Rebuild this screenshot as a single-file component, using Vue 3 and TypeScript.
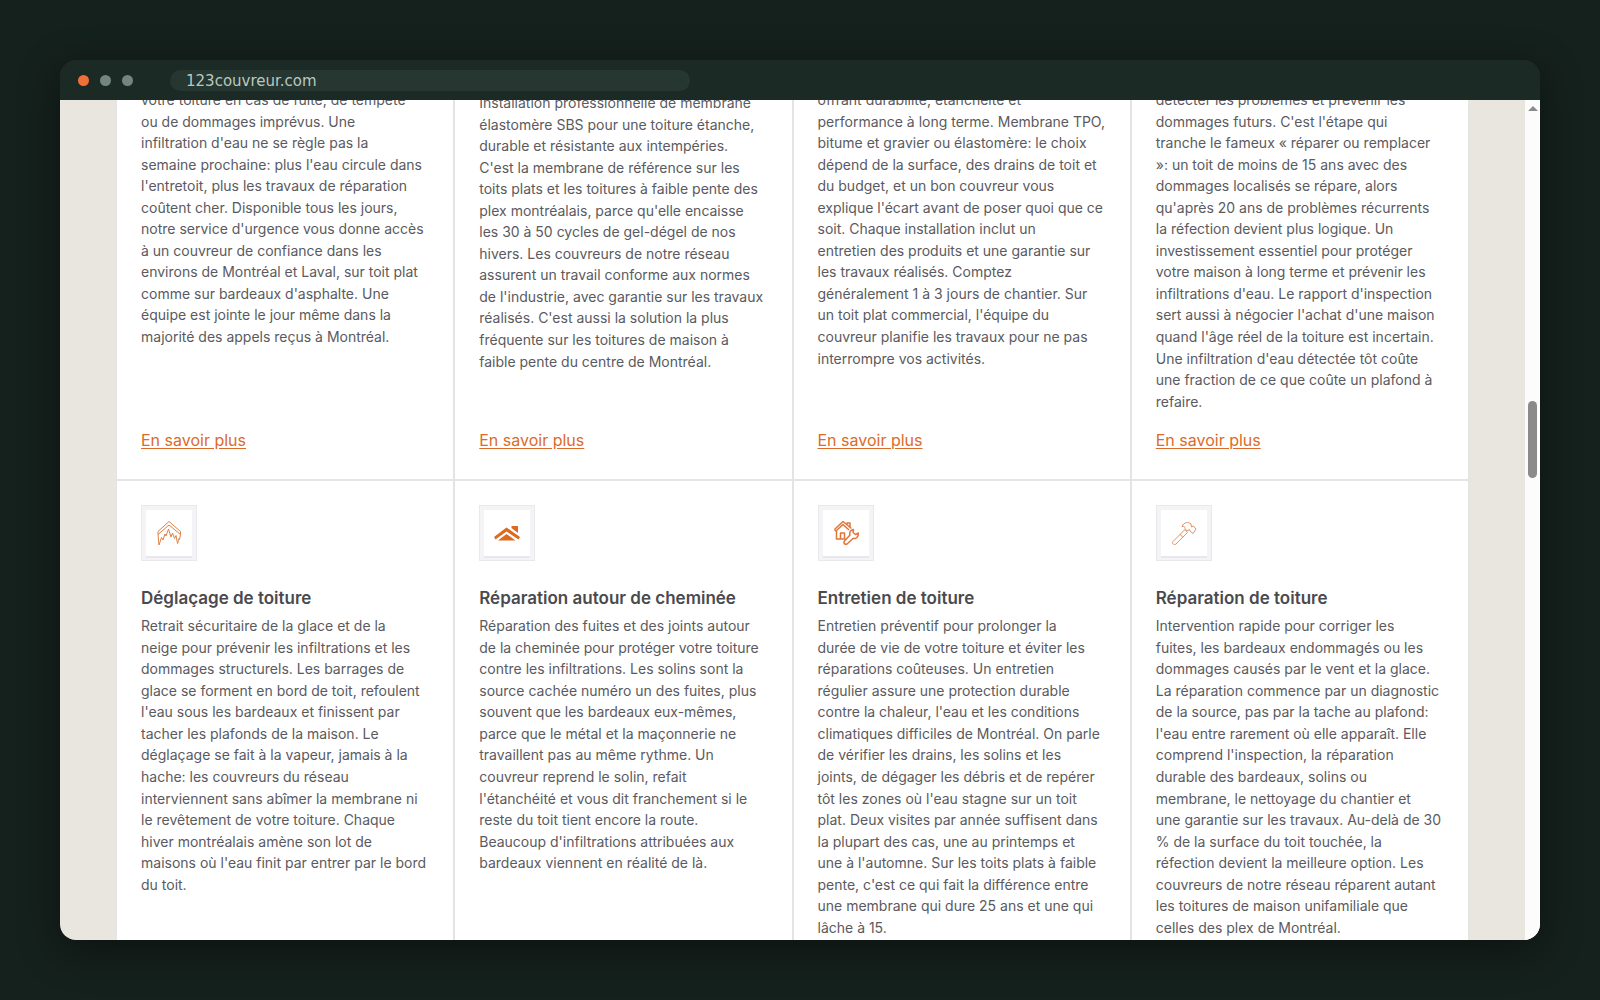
<script setup lang="ts">
interface Service {
  text: string
  title?: string
  icon?: 'ice' | 'roof' | 'care' | 'hammer'
  lowered?: boolean
}

const firstRow: Service[] = [
  {
    text: `votre toiture en cas de fuite, de tempête
ou de dommages imprévus. Une
infiltration d'eau ne se règle pas la
semaine prochaine: plus l'eau circule dans
l'entretoit, plus les travaux de réparation
coûtent cher. Disponible tous les jours,
notre service d'urgence vous donne accès
à un couvreur de confiance dans les
environs de Montréal et Laval, sur toit plat
comme sur bardeaux d'asphalte. Une
équipe est jointe le jour même dans la
majorité des appels reçus à Montréal.`,
  },
  {
    lowered: true,
    text: `Installation professionnelle de membrane
élastomère SBS pour une toiture étanche,
durable et résistante aux intempéries.
C'est la membrane de référence sur les
toits plats et les toitures à faible pente des
plex montréalais, parce qu'elle encaisse
les 30 à 50 cycles de gel-dégel de nos
hivers. Les couvreurs de notre réseau
assurent un travail conforme aux normes
de l'industrie, avec garantie sur les travaux
réalisés. C'est aussi la solution la plus
fréquente sur les toitures de maison à
faible pente du centre de Montréal.`,
  },
  {
    text: `offrant durabilité, étanchéité et
performance à long terme. Membrane TPO,
bitume et gravier ou élastomère: le choix
dépend de la surface, des drains de toit et
du budget, et un bon couvreur vous
explique l'écart avant de poser quoi que ce
soit. Chaque installation inclut un
entretien des produits et une garantie sur
les travaux réalisés. Comptez
généralement 1 à 3 jours de chantier. Sur
un toit plat commercial, l'équipe du
couvreur planifie les travaux pour ne pas
interrompre vos activités.`,
  },
  {
    text: `détecter les problèmes et prévenir les
dommages futurs. C'est l'étape qui
tranche le fameux « réparer ou remplacer
»: un toit de moins de 15 ans avec des
dommages localisés se répare, alors
qu'après 20 ans de problèmes récurrents
la réfection devient plus logique. Un
investissement essentiel pour protéger
votre maison à long terme et prévenir les
infiltrations d'eau. Le rapport d'inspection
sert aussi à négocier l'achat d'une maison
quand l'âge réel de la toiture est incertain.
Une infiltration d'eau détectée tôt coûte
une fraction de ce que coûte un plafond à
refaire.`,
  },
]

const secondRow: Service[] = [
  {
    icon: 'ice',
    title: 'Déglaçage de toiture',
    text: `Retrait sécuritaire de la glace et de la
neige pour prévenir les infiltrations et les
dommages structurels. Les barrages de
glace se forment en bord de toit, refoulent
l'eau sous les bardeaux et finissent par
tacher les plafonds de la maison. Le
déglaçage se fait à la vapeur, jamais à la
hache: les couvreurs du réseau
interviennent sans abîmer la membrane ni
le revêtement de votre toiture. Chaque
hiver montréalais amène son lot de
maisons où l'eau finit par entrer par le bord
du toit.`,
  },
  {
    icon: 'roof',
    title: 'Réparation autour de cheminée',
    text: `Réparation des fuites et des joints autour
de la cheminée pour protéger votre toiture
contre les infiltrations. Les solins sont la
source cachée numéro un des fuites, plus
souvent que les bardeaux eux-mêmes,
parce que le métal et la maçonnerie ne
travaillent pas au même rythme. Un
couvreur reprend le solin, refait
l'étanchéité et vous dit franchement si le
reste du toit tient encore la route.
Beaucoup d'infiltrations attribuées aux
bardeaux viennent en réalité de là.`,
  },
  {
    icon: 'care',
    title: 'Entretien de toiture',
    text: `Entretien préventif pour prolonger la
durée de vie de votre toiture et éviter les
réparations coûteuses. Un entretien
régulier assure une protection durable
contre la chaleur, l'eau et les conditions
climatiques difficiles de Montréal. On parle
de vérifier les drains, les solins et les
joints, de dégager les débris et de repérer
tôt les zones où l'eau stagne sur un toit
plat. Deux visites par année suffisent dans
la plupart des cas, une au printemps et
une à l'automne. Sur les toits plats à faible
pente, c'est ce qui fait la différence entre
une membrane qui dure 25 ans et une qui
lâche à 15.`,
  },
  {
    icon: 'hammer',
    title: 'Réparation de toiture',
    text: `Intervention rapide pour corriger les
fuites, les bardeaux endommagés ou les
dommages causés par le vent et la glace.
La réparation commence par un diagnostic
de la source, pas par la tache au plafond:
l'eau entre rarement où elle apparaît. Elle
comprend l'inspection, la réparation
durable des bardeaux, solins ou
membrane, le nettoyage du chantier et
une garantie sur les travaux. Au-delà de 30
% de la surface du toit touchée, la
réfection devient la meilleure option. Les
couvreurs de notre réseau réparent autant
les toitures de maison unifamiliale que
celles des plex de Montréal.`,
  },
]
</script>

<template>
  <div class="desktop">
    <div class="window">
      <header class="titlebar">
        <span class="dot dot-close"></span>
        <span class="dot"></span>
        <span class="dot"></span>
        <input class="address" type="text" value="123couvreur.com" aria-label="Adresse" />
      </header>

      <div class="viewport">
        <main class="page">
          <section class="row row-first">
            <article v-for="(s, i) in firstRow" :key="i" class="card">
              <p class="text" :class="{ lowered: s.lowered }">{{ s.text }}</p>
              <a class="more" href="#">En savoir plus</a>
            </article>
          </section>
          <section class="row row-second">
            <article v-for="s in secondRow" :key="s.title" class="card">
              <div class="badge">
                <div class="badge-inner">
                  <svg v-if="s.icon === 'ice'" width="26" height="26" viewBox="0 0 26 26" class="line ice">
                    <path d="M2 11.500 13 1.500l11.500 10v3L13 5 2 14.500z" />
                    <path d="M2 14.500 3 25l2.500-7.500L7 20l2-6 1 2 2.500-7L15 17l1.500-4 2 5.500 1.500-3 1.500 8 1.500-5 .5 1 1-5" />
                  </svg>
                  <svg v-else-if="s.icon === 'roof'" width="26" height="26" viewBox="0 0 26 26" class="solid">
                    <path d="M0 17 12.500 7.500 26 17l-1.500 2.500-12-8-11 8z" />
                    <path d="M4 20.500l8.500-6.500 9 6.500z" />
                    <path d="M17.500 6H24v7l-4-3-2.500-2z" />
                  </svg>
                  <svg v-else-if="s.icon === 'care'" width="26" height="26" viewBox="0 0 26 26" class="line care">
                    <path d="M3.500 11v8h9M1.500 9.500l8.500-8 8.500 7M1.500 9.500 3 11l7-6.500 6 5.500M14 5V3h3v4" />
                    <path d="M7.500 19v-6h4v6" />
                    <path d="M20.500 9.500c-3 .5-4.500 3-3.500 5.500l-5.500 6c-1.500 2 .5 4 2.500 3l6-5.500c3 .5 5.500-1.500 5.500-5.500l-3 1.500-2.500-2z" />
                  </svg>
                  <svg v-else width="26" height="26" viewBox="0 0 26 26" class="line hammer">
                    <path d="M11 6.500C13 2 17.500 1.500 20 4l.5 3 2-1L25 9l-3 4.500-3-2.500-.5-1.500L16 11l-2-2.500c0-2-1-2.500-3-2z" />
                    <path d="m14 9.500 2.500 3L5 24c-2 1.500-4.500-.5-3-2.500z" />
                    <path d="m9 14 2.500 3" />
                  </svg>
                </div>
              </div>
              <h3 class="title">{{ s.title }}</h3>
              <p class="text">{{ s.text }}</p>
            </article>
          </section>
        </main>
        <div class="scrollbar" aria-hidden="true">
          <span class="arrow"></span>
          <span class="thumb"></span>
        </div>
      </div>
    </div>
  </div>
</template>

<style>
body {
  background: #15211d;
}
</style>

<style scoped>
* {
  box-sizing: border-box;
}

.desktop {
  height: 100vh;
  padding: 60px;
  background: #15211d;
  font-family: Inter, "Liberation Sans", sans-serif;
}

.window {
  display: flex;
  flex-direction: column;
  height: 100%;
  border-radius: 16px;
  overflow: hidden;
  box-shadow: 0 10px 40px rgba(0, 0, 0, 0.45);
}

.titlebar {
  display: flex;
  flex: none;
  align-items: center;
  gap: 11px;
  height: 40px;
  padding: 1px 18px 0;
  background: #1c2a26;
}

.dot {
  width: 11px;
  height: 11px;
  border-radius: 50%;
  background: #738580;
}

.dot-close {
  background: #ee6f3a;
}

.address {
  width: 36%;
  height: 21px;
  margin-left: 26px;
  padding: 0 16px;
  border: 0;
  border-radius: 11px;
  background: #263630;
  color: #b9c8c2;
  font: 15px "DejaVu Sans", sans-serif;
}

.viewport {
  display: flex;
  flex: 1;
  min-height: 0;
  background: #e9e6df;
}

.page {
  display: flex;
  flex: 1;
  flex-direction: column;
  min-width: 0;
  padding: 0 56px;
  overflow: hidden;
}

.row {
  display: grid;
  flex: none;
  grid-template-columns: repeat(4, 1fr);
}

.row-first {
  margin-top: -36px;
}

.card {
  display: flex;
  flex-direction: column;
  align-items: flex-start;
  min-width: 0;
  padding: 24px;
  border: 1px solid #e4e4e5;
  background: #fff;
}

.row-first .card {
  padding-bottom: 27px;
}

.text {
  margin: 0;
  color: #5a5a60;
  font-size: 14px;
  line-height: 1.54;
  white-space: pre;
}

.lowered {
  padding-top: 3px;
}

.more {
  margin-top: auto;
  padding-top: 16px;
  color: #dc6b2a;
  font-size: 16px;
  line-height: 24px;
  text-underline-offset: 2px;
}

.badge {
  width: 56px;
  height: 56px;
  padding: 4px;
  border: 1px solid #e9e9ec;
  background: #f4f4f6;
}

.badge-inner {
  display: flex;
  align-items: center;
  justify-content: center;
  height: 46px;
  background: #fff;
  box-shadow: 0 2px 0 #e6e8ee;
}

.line {
  fill: none;
  stroke: #e08048;
  stroke-linejoin: round;
}

.care {
  stroke: #e0763a;
  stroke-width: 1.5;
}

.hammer {
  stroke: #e6935f;
}

.solid {
  fill: #dc6b22;
}

.title {
  margin: 25px 0 5px;
  color: #4a4a4e;
  font-size: 17px;
  font-weight: 600;
  line-height: 24px;
}

.scrollbar {
  display: flex;
  flex: none;
  flex-direction: column;
  align-items: center;
  width: 15px;
  padding-top: 6px;
  background: #fcfcfc;
}

.arrow {
  border: 5px solid transparent;
  border-top-width: 0;
  border-bottom-color: #8b8b8b;
}

.thumb {
  width: 9px;
  height: 77px;
  margin-top: 290px;
  border-radius: 5px;
  background: #8b8b8b;
}
</style>
